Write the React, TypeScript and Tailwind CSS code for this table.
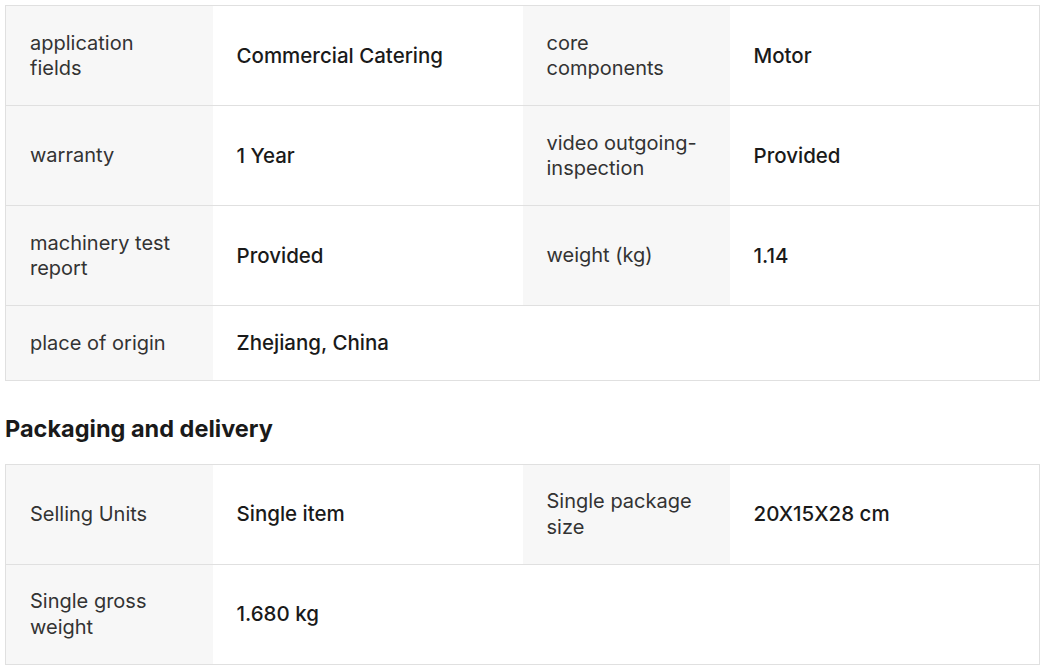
import React from "react";

type Row = [string, string, string?, string?];

const attrs: Row[] = [
  ["application fields", "Commercial Catering", "core components", "Motor"],
  ["warranty", "1 Year", "video outgoing-inspection", "Provided"],
  ["machinery test report", "Provided", "weight (kg)", "1.14"],
  ["place of origin", "Zhejiang, China"],
];

const pack: Row[] = [
  ["Selling Units", "Single item", "Single package size", "20X15X28 cm"],
  ["Single gross weight", "1.680 kg"],
];

function Table({ rows }: { rows: Row[] }) {
  return (
    <table className="w-[1035px] table-fixed border-collapse border border-[#e0e0e0]">
      <colgroup>
        <col className="w-[207px]" />
        <col className="w-[310px]" />
        <col className="w-[207px]" />
        <col />
      </colgroup>
      <tbody>
        {rows.map((r, i) => (
          <tr key={i} className="border-b border-[#e0e0e0]">
            <td className="bg-[#f7f7f7] px-6 pt-[24.5px] pb-[23.5px] align-middle text-[20px] leading-[25.5px] text-[#333]">{r[0]}</td>
            <td className="px-6 py-6 align-middle text-[20.5px] leading-[25.5px] font-medium text-[#1a1a1a]">{r[1]}</td>
            {r[2] !== undefined ? (
              <>
                <td className="bg-[#f7f7f7] px-6 pt-[24.5px] pb-[23.5px] align-middle text-[20px] leading-[25.5px] text-[#333]">{r[2]}</td>
                <td className="px-6 py-6 align-middle text-[20.5px] leading-[25.5px] font-medium text-[#1a1a1a]">{r[3]}</td>
              </>
            ) : (
              <>
                <td />
                <td />
              </>
            )}
          </tr>
        ))}
      </tbody>
    </table>
  );
}

export default function App() {
  return (
    <div className="bg-white w-[1046px] h-[669px] overflow-hidden pt-[5px] pl-[5px]" style={{ fontFamily: "Inter, 'Noto Sans', sans-serif" }}>
      <Table rows={attrs} />
      <h2 className="mt-[33px] mb-[20px] text-[23.5px] leading-[30px] font-bold text-[#1a1a1a]">Packaging and delivery</h2>
      <Table rows={pack} />
    </div>
  );
}
